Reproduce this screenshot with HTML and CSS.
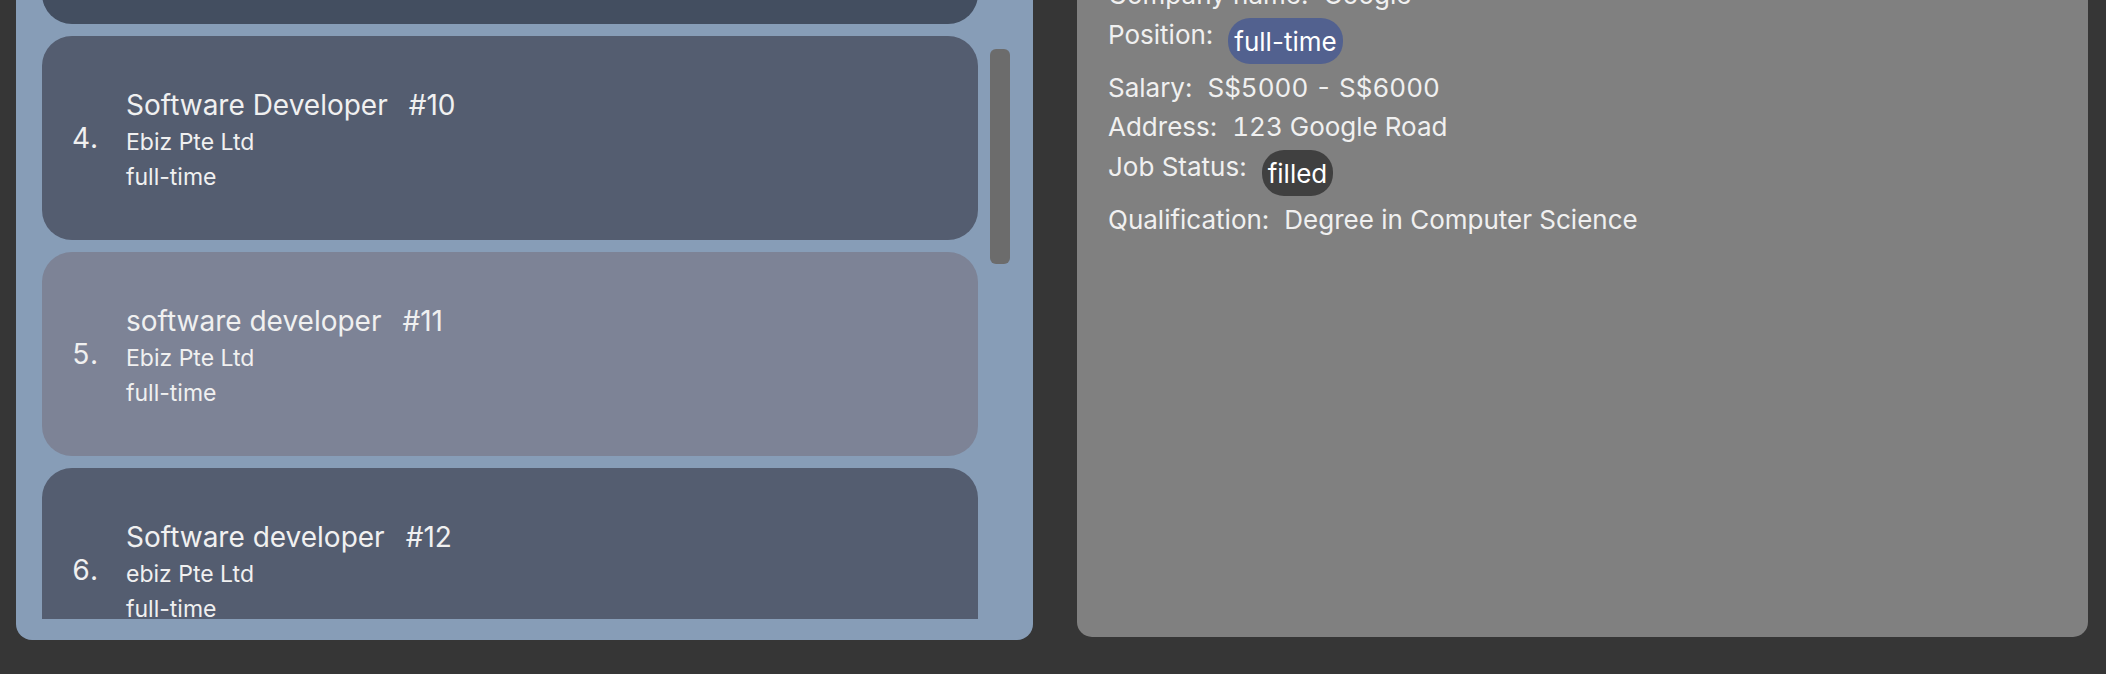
FILE: index.html
```html
<!DOCTYPE html>
<html lang="en">
<head>
<meta charset="utf-8">
<title>Jobs</title>
<link rel="stylesheet" href="styles.css">
</head>
<body>
<div class="app">
  <section class="list-panel">
    <div class="viewport">
      <div class="cards">
        <div class="card card-hover"></div>
        <div class="card">
          <div class="index">4.</div>
          <div class="info">
            <div class="title"><span>Software Developer</span><span class="id">#10</span></div>
            <div class="company">Ebiz Pte Ltd</div>
            <div class="type">full-time</div>
          </div>
        </div>
        <div class="card card-selected">
          <div class="index">5.</div>
          <div class="info">
            <div class="title"><span>software developer</span><span class="id">#11</span></div>
            <div class="company">Ebiz Pte Ltd</div>
            <div class="type">full-time</div>
          </div>
        </div>
        <div class="card">
          <div class="index">6.</div>
          <div class="info">
            <div class="title"><span>Software developer</span><span class="id">#12</span></div>
            <div class="company">ebiz Pte Ltd</div>
            <div class="type">full-time</div>
          </div>
        </div>
      </div>
      <div class="scroll-track"><div class="scroll-thumb"></div></div>
    </div>
  </section>
  <section class="detail-panel">
    <div class="detail">
      <div class="row"><span class="label">Company name:</span><span class="value">Google</span></div>
      <div class="row row-pill"><span class="label">Position:</span><span class="pill pill-blue">full-time</span></div>
      <div class="row"><span class="label">Salary:</span><span class="value num">S$5000 - S$6000</span></div>
      <div class="row"><span class="label">Address:</span><span class="value num">123 Google Road</span></div>
      <div class="row row-pill"><span class="label">Job Status:</span><span class="pill pill-dark">filled</span></div>
      <div class="row"><span class="label">Qualification:</span><span class="value">Degree in Computer Science</span></div>
    </div>
  </section>
</div>
</body>
</html>
```

FILE: styles.css
```css
* { box-sizing: border-box; }

html, body {
  margin: 0;
  padding: 0;
  background: #363636;
  overflow: hidden;
}

body {
  font-family: "Inter", "Noto Sans", sans-serif;
  color: #f0f0f0;
  width: 2106px;
  height: 674px;
}

.num { font-variant-numeric: tabular-nums; }

.app {
  display: flex;
  gap: 44px;
  padding: 0 18px 0 16px;
  align-items: flex-start;
}

/* ---------- list panel ---------- */
.list-panel {
  width: 1017px;
  height: 640px;
  background: #879db7;
  border-radius: 0 0 16px 16px;
  padding: 0 23px 21px 26px;
}

.viewport {
  height: 619px;
  overflow: hidden;
  display: flex;
  gap: 12px;
}

.cards {
  width: 936px;
  flex: none;
  display: flex;
  flex-direction: column;
  gap: 12px;
  margin-top: -180px;
}

.card {
  flex: none;
  height: 204px;
  border-radius: 30px;
  background: #545d70;
  display: flex;
  align-items: center;
  padding-left: 30px;
}

.card-hover { background: #434e60; }
.card-selected { background: #7d8396; }

.index {
  width: 54px;
  flex: none;
  font-size: 28px;
  line-height: 32px;
  font-variant-numeric: tabular-nums;
}

.info {
  display: flex;
  flex-direction: column;
  margin-top: 2px;
}

.title {
  font-size: 28px;
  line-height: 34px;
  display: flex;
  gap: 21px;
}

.company {
  font-size: 23px;
  line-height: 26px;
  margin-top: 7px;
}

.type {
  font-size: 23px;
  line-height: 26px;
  margin-top: 9px;
}

.scroll-track {
  width: 20px;
  flex: none;
}

.scroll-thumb {
  margin-top: 49px;
  height: 215px;
  background: #6c6c6c;
  border-radius: 6px;
}

/* ---------- detail panel ---------- */
.detail-panel {
  width: 1011px;
  height: 637px;
  background: #808080;
  border-radius: 0 0 15px 15px;
  padding-left: 31px;
  overflow: hidden;
}

.detail {
  margin-top: -21px;
  display: flex;
  flex-direction: column;
  gap: 8px;
}

.row {
  display: flex;
  align-items: flex-start;
  gap: 15px;
  font-size: 26px;
  line-height: 31px;
}

.row-pill { gap: 15px; }
.row-pill .label { margin-top: 1px; }

.pill {
  border-radius: 22px;
  padding: 8px 6px 6px;
  line-height: 32px;
  color: #ffffff;
}

.pill-blue { background: #52618f; }
.pill-dark { background: #404040; }
```
